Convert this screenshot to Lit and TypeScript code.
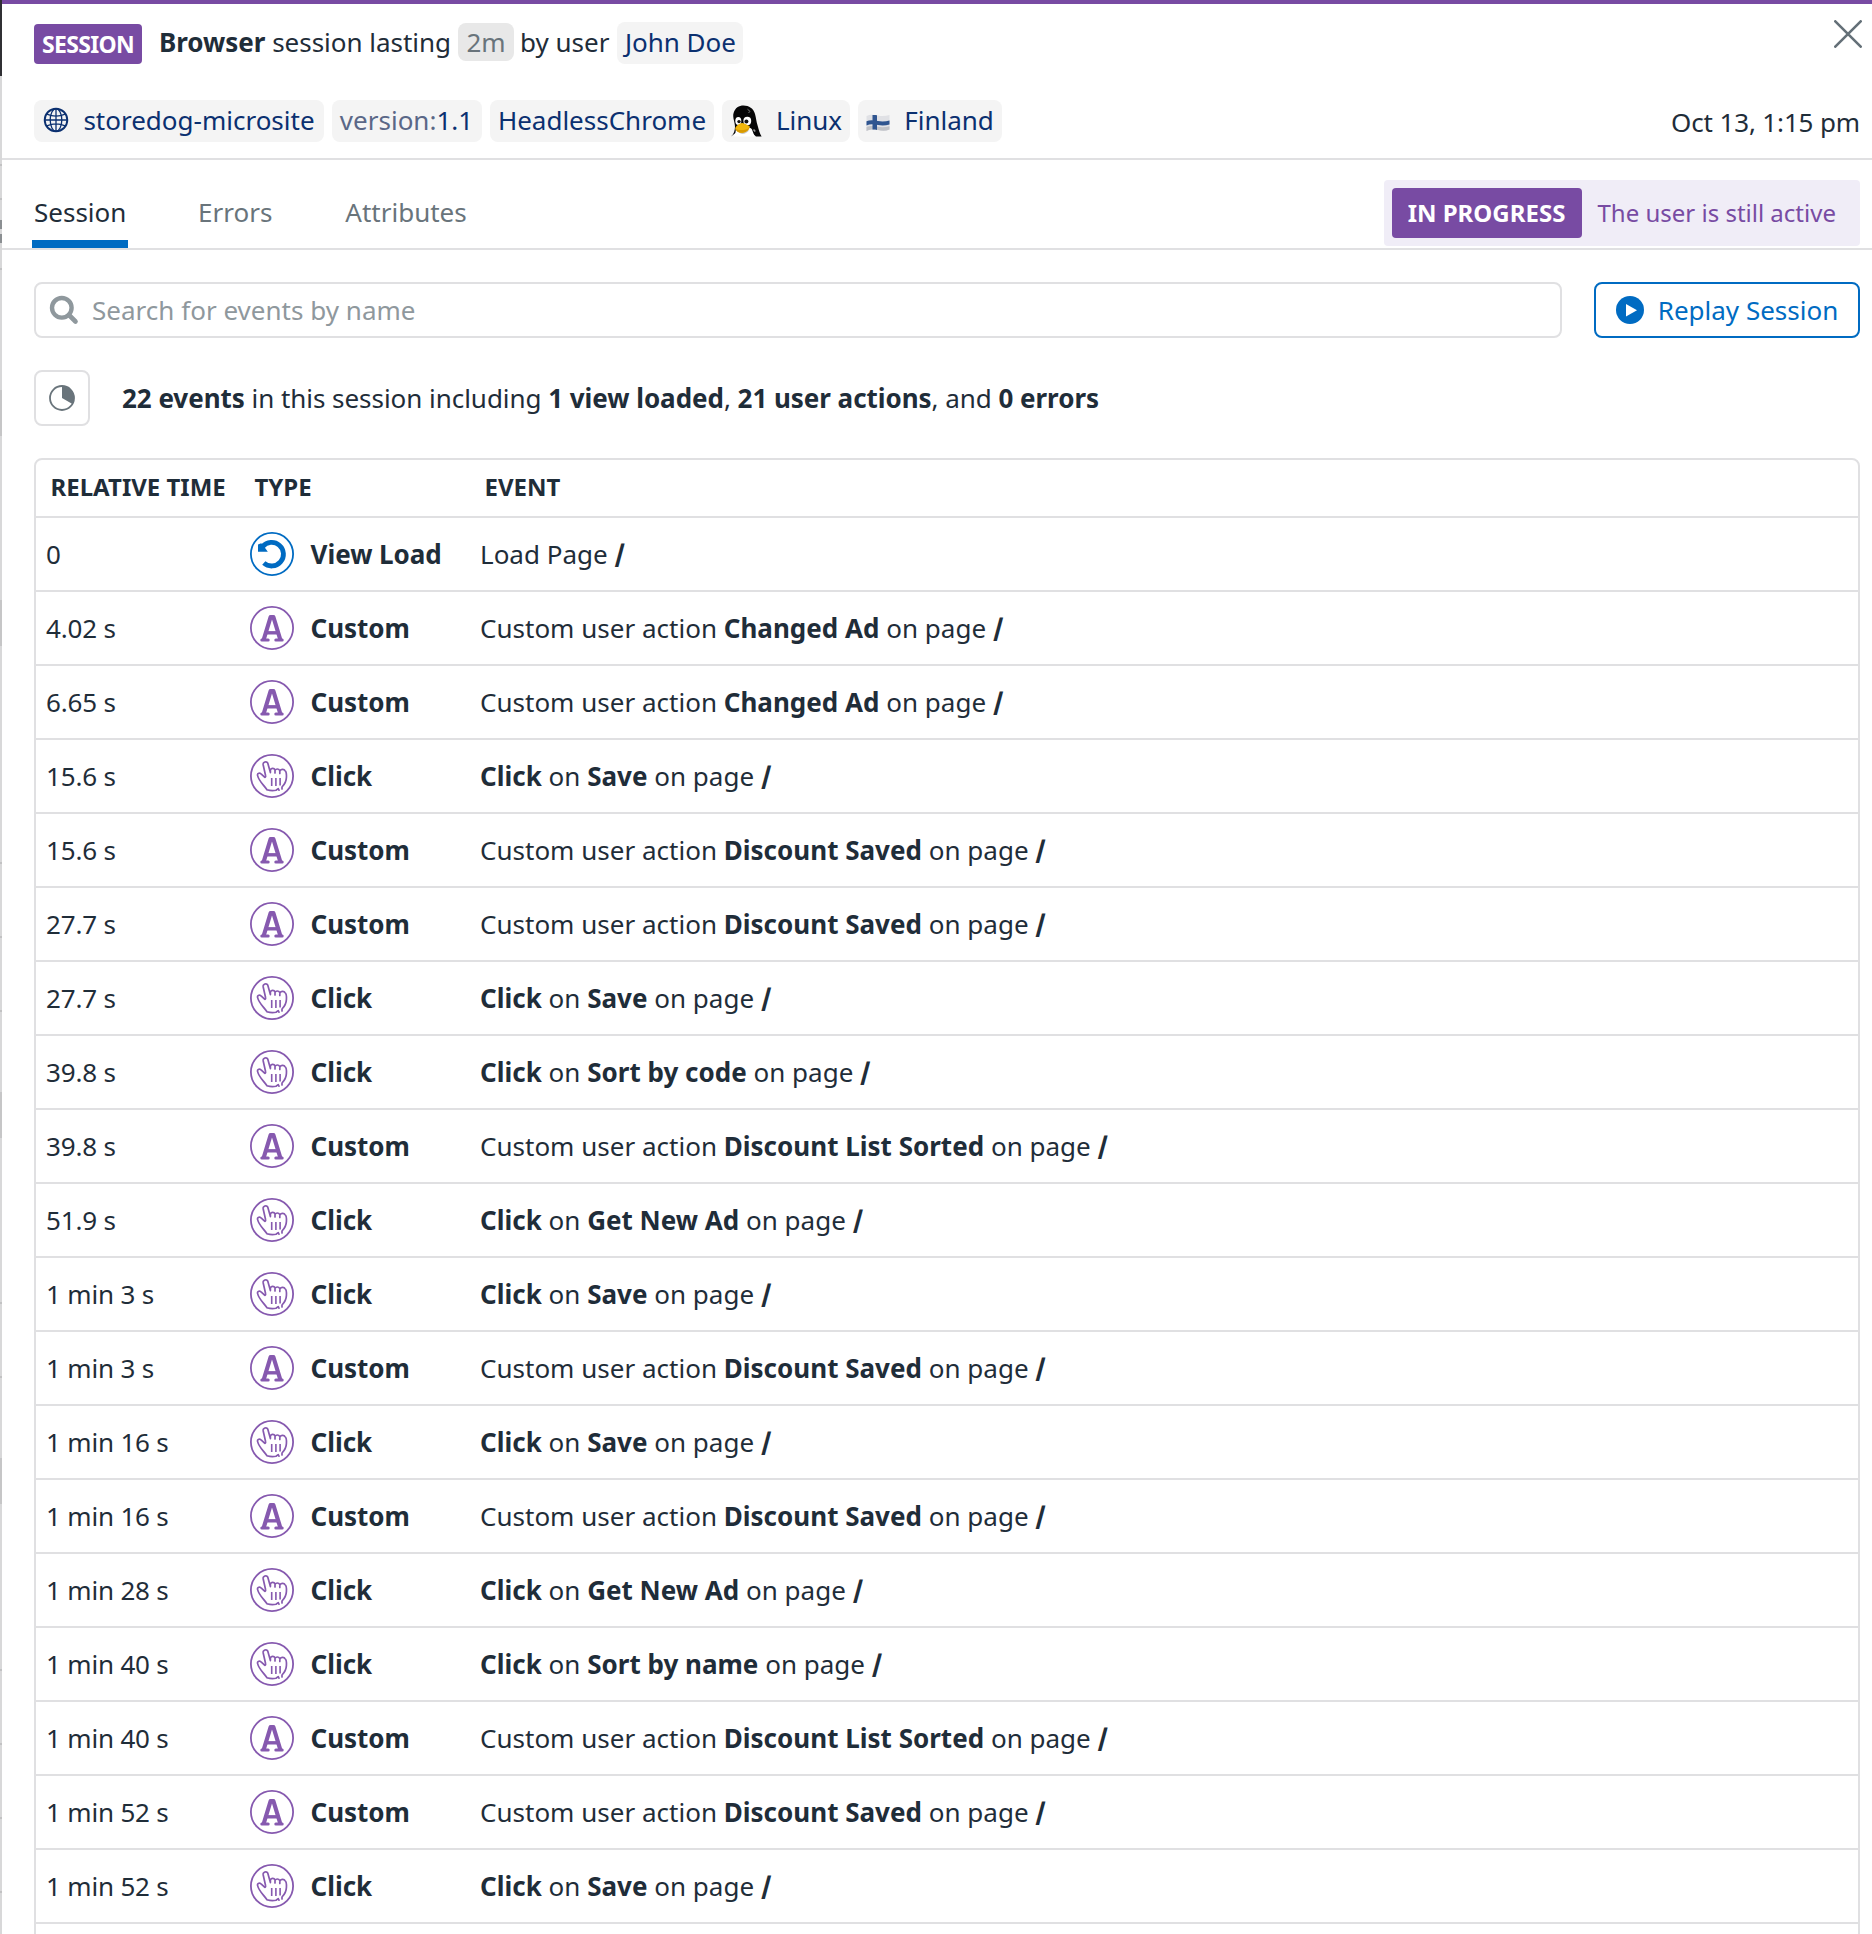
import { LitElement, html, css, svg, nothing } from "lit";
import { customElement, property } from "lit/decorators.js";

type Kind = "view" | "custom" | "click";
interface EventRow {
  time: string;
  kind: Kind;
  target: string;
}

const LABELS: Record<Kind, string> = { view: "View Load", custom: "Custom", click: "Click" };

const ROWS: EventRow[] = [
  { time: "0", kind: "view", target: "" },
  { time: "4.02 s", kind: "custom", target: "Changed Ad" },
  { time: "6.65 s", kind: "custom", target: "Changed Ad" },
  { time: "15.6 s", kind: "click", target: "Save" },
  { time: "15.6 s", kind: "custom", target: "Discount Saved" },
  { time: "27.7 s", kind: "custom", target: "Discount Saved" },
  { time: "27.7 s", kind: "click", target: "Save" },
  { time: "39.8 s", kind: "click", target: "Sort by code" },
  { time: "39.8 s", kind: "custom", target: "Discount List Sorted" },
  { time: "51.9 s", kind: "click", target: "Get New Ad" },
  { time: "1 min 3 s", kind: "click", target: "Save" },
  { time: "1 min 3 s", kind: "custom", target: "Discount Saved" },
  { time: "1 min 16 s", kind: "click", target: "Save" },
  { time: "1 min 16 s", kind: "custom", target: "Discount Saved" },
  { time: "1 min 28 s", kind: "click", target: "Get New Ad" },
  { time: "1 min 40 s", kind: "click", target: "Sort by name" },
  { time: "1 min 40 s", kind: "custom", target: "Discount List Sorted" },
  { time: "1 min 52 s", kind: "custom", target: "Discount Saved" },
  { time: "1 min 52 s", kind: "click", target: "Save" },
];

/* Row separators and shaded cells of the page behind the panel: [top, height, fill]. */
const BACKDROP: [number, number, string][] = [
  [0, 76, "#303034"],
  [164, 2, "#c2c2c3"],
  [198, 2, "#c2c2c3"],
  [220, 9, "#8b8f92"],
  [234, 9, "#8b8f92"],
  [268, 2, "#c2c2c3"],
  [390, 46, "#c6c6c7"],
  [600, 46, "#c6c6c7"],
  [862, 2, "#c2c2c3"],
  [936, 2, "#c2c2c3"],
  [1010, 2, "#c2c2c3"],
  [1092, 46, "#c6c6c7"],
  [1302, 2, "#c2c2c3"],
  [1376, 2, "#c2c2c3"],
  [1458, 46, "#c6c6c7"],
  [1669, 2, "#c2c2c3"],
  [1743, 2, "#c2c2c3"],
  [1817, 2, "#c2c2c3"],
  [1891, 2, "#c2c2c3"],
];

/* Circled glyph that marks the kind of an event. */
@customElement("event-icon")
export class EventIcon extends LitElement {
  @property() kind: Kind = "custom";

  static styles = css`
    :host { display: block; width: 44px; height: 44px; }
    .icon { display: block; width: 44px; height: 44px; fill: none; color: #8659af; }
    .view { color: #006bc2; }
  `;

  private glyph() {
    if (this.kind === "view") {
      return svg`
        <path d="M12.6 14.6 A11.8 11.8 0 1 1 13.8 31" stroke="currentColor" stroke-width="4.8"/>
        <path d="M8 12.4 L11.2 11.2 L13 13 L17.8 19.8 H8 Z" fill="currentColor"/>`;
    }
    if (this.kind === "custom") {
      return svg`
        <path d="M13.6 34 L20.6 11 H23.4 L30.4 34" stroke="currentColor" stroke-width="4.2" stroke-linejoin="round"/>
        <path d="M16.5 26.8 H27.5" stroke="currentColor" stroke-width="3.4"/>
        <path d="M11.8 33.9 H18.2 M25.8 33.9 H32.2" stroke="currentColor" stroke-width="3" stroke-linecap="round"/>`;
    }
    return svg`
      <path d="M17 35.8 C14 31.2 9.2 27.6 7.6 21.6 C7 19 10 18.2 11.6 20.4 L14.6 23.2 C15.6 23.6 15.8 22.4 15.5 21.3 L13.2 11 C12.6 8 16.6 6.6 17.8 9.2 L20.4 18.6 V15.8 C21.4 13.8 24.2 14 25 16 V19 M25 16.4 C26 14.6 28.6 14.4 29.8 16.6 V19.4 M29.8 17.2 C31 14.8 34.2 15 35 16.6 C36.8 17.8 36.6 20 36.4 23.6 C36.2 27.8 34.6 30.4 32 33 V35 M17 35.8 C19 36.4 22 37.2 26 36.2 L28.2 34.6 L29 36.2" stroke="currentColor" stroke-width="1.7" stroke-linejoin="round" stroke-linecap="round"/>
      <path d="M21.7 24 V32 M25.9 24 V32 M30.1 24 V31.5" stroke="currentColor" stroke-width="1.6"/>`;
  }

  render() {
    return html`<svg class="icon ${this.kind}" viewBox="0 0 44 44">
      <circle cx="22" cy="22" r="21.1" stroke="currentColor" stroke-width="1.8"></circle>
      ${this.glyph()}
    </svg>`;
  }
}

const globe = html`<svg class="globe" viewBox="0 0 26 26">
  <circle cx="13" cy="13" r="11.3" stroke-width="1.9"></circle>
  <ellipse cx="13" cy="13" rx="5.8" ry="11.3"></ellipse>
  <path d="M13 1.7 V24.3 M1.7 13 H24.3 M3.8 7.2 Q13 11 22.2 7.2 M3.8 18.8 Q13 15 22.2 18.8"></path>
</svg>`;

const penguin = html`<svg class="penguin" viewBox="0 0 32 32">
  <path d="M1 31.4 C4 29 4.8 26 5 22 C5.2 18 2.2 12 3.600 8 C5 3 9 .6 13.5 .6 C19 .6 23.500 3.5 25 9 C26 12.500 26.400 17 27.600 20.500 C29 25 29.500 28.500 31.600 31.400 H26 L20 26 H8 Z" fill="#050506"></path>
  <path d="M6 23 C9.500 21.500 20 21 22 24.500 L24.600 31.400 H3.600 C6 29 5.500 26 6 23 Z" fill="#fff"></path>
  <path d="M7.500 25 C10 30.500 15 30 19.500 25 L13 27 Z" fill="#c9c9cb"></path>
  <ellipse cx="8.300" cy="16" rx="3" ry="3.900" fill="#fff"></ellipse>
  <ellipse cx="17.300" cy="16" rx="3.900" ry="4.200" fill="#fff"></ellipse>
  <circle cx="9" cy="16.600" r="1.700" fill="#111"></circle>
  <circle cx="16.400" cy="16.600" r="2" fill="#111"></circle>
  <path d="M5.200 23 C7 20 10 17.600 12.500 18 C15 18.400 17 20 19.800 21.200 C19.500 25 15 27.800 11.800 27.800 C8.500 27.800 5.500 26 5.200 23 Z" fill="#f2b70c"></path>
  <path d="M5.400 23.400 C8 25.600 15.500 26 19.600 22.400 C18.500 26.200 14.500 27.800 11.800 27.800 C8.800 27.800 6 26 5.400 23.400 Z" fill="#d99a00"></path>
  <path d="M17.500 4.200 L20 6.400 L18.500 8" stroke="#777" stroke-width="1" fill="none"></path>
  <path d="M23.500 24.500 L25.200 26.500" stroke="#999" stroke-width="1.600"></path>
</svg>`;

const flag = html`<svg class="flag" viewBox="0 0 24 18">
  <path d="M.5 2 C4 .2 8 .5 12 1.500 C16 2.500 20 2 23.500 1 V15.500 C20 17 16 17 12 16 C8 15.200 4 15.500 .5 17 Z" fill="#e0e1e5"></path>
  <path d="M.5 13 C5 11.500 8 12 12 12.800 C16 13.600 20 13.200 23.500 12.200 V15.500 C20 17 16 17 12 16 C8 15.200 4 15.500 .5 17 Z" fill="#c0c2c7"></path>
  <path d="M6.500 1 C8 .8 9.500 1 11 1.300 V15.900 C9.500 15.500 8 15.400 6.500 15.500 Z" fill="#2f5590"></path>
  <path d="M.5 7.200 C4 5.600 8 6.200 12 7 C16 7.800 20 7.400 23.500 6.400 V10.400 C20 11.500 16 11.800 12 11 C8 10.200 4 9.800 .5 11.400 Z" fill="#2f5590"></path>
</svg>`;

@customElement("app-root")
export class AppRoot extends LitElement {
  static styles = css`
    :host {
      display: flex;
      height: 1934px;
      overflow: hidden;
      background: #fff;
      color: #1f2d39;
      font: 26px/36px "Noto Sans", sans-serif;
    }
    * { box-sizing: border-box; }
    svg { display: block; flex: none; fill: none; }
    b { font-weight: 700; }
    .backdrop { width: 2px; height: 1934px; background: #d8d8d9; }
    .panel { flex: 1; min-width: 0; border-top: 4px solid #784ba3; }
    .header { height: 156px; padding: 18px 12px 0 32px; border-bottom: 2px solid #e0e0e2; }
    .title-row { display: flex; align-items: flex-start; height: 78px; }
    .badge {
      display: flex; align-items: center; justify-content: center;
      background: #784ba3; color: #fff; font-weight: 700; border-radius: 4px;
    }
    .session { width: 108px; height: 40px; margin: 2px 17px 0 0; padding-bottom: 1px; font-size: 23px; letter-spacing: -0.7px; }
    .title { flex: 1; display: flex; align-items: center; height: 42px; white-space: pre; letter-spacing: -0.02px; }
    .title > *, .chip > span { padding-bottom: 2px; }
    .chip {
      display: flex; align-items: center; justify-content: center; height: 42px; flex: none; padding-bottom: 2px;
      background: #f4f4f4; color: #0b3070; border-radius: 8px; white-space: pre;
    }
    .tags-row .chip { padding-bottom: 0; }
    .duration { height: 38px; width: 56px; margin: 0 6px 2px 7px; padding-bottom: 0; background: #e8e8e8; color: #69747b; }
    .name { width: 126px; margin-left: 8px; }
    .close { width: 28px; height: 28px; margin: -2px -2px 0 0; stroke: #647078; stroke-width: 2.6; stroke-linecap: round; }
    .tags-row { display: flex; gap: 8px; }
    .app { width: 290px; gap: 14px; }
    .version { width: 150px; padding-right: 1px; }
    .key { color: #5a6787; }
    .browser { width: 224px; }
    .os { width: 128px; gap: 14px; }
    .country { width: 144px; gap: 14px; }
    .globe { width: 26px; height: 26px; margin-bottom: 2px; stroke: #0b3070; stroke-width: 1.3; }
    .penguin { width: 32px; height: 32px; }
    .flag { width: 24px; height: 18px; margin-top: 3px; }
    .date { margin: 4px 0 0 auto; letter-spacing: -0.14px; }
    .tabs { display: flex; height: 90px; padding: 20px 12px 0 30px; border-bottom: 2px solid #e0e0e2; color: #69747b; }
    .tab { height: 68px; padding: 14px 2px 0; margin-right: 69px; white-space: nowrap; }
    .active { color: #1f2d39; border-bottom: 8px solid #006bc2; width: 96px; margin-right: 68px; }
    .status {
      display: flex; align-items: center; width: 476px; height: 66px; margin-left: auto; padding: 8px;
      border-radius: 4px; background: #f0edf7; color: #784ba3; font-size: 24px;
    }
    .progress { width: 190px; height: 50px; margin-right: 15.5px; padding-right: 1px; }
    .body { padding: 32px 12px 0 32px; }
    .search-row { display: flex; gap: 32px; height: 56px; }
    .search { flex: 1; display: flex; align-items: center; padding-left: 13px; gap: 13px; border: 2px solid #e0e0e2; border-radius: 8px; color: #8f989d; letter-spacing: 0.02px; }
    .lens { width: 30px; height: 30px; stroke: #8f989d; }
    .replay { display: flex; align-items: center; justify-content: center; gap: 14px; width: 266px; border: 2px solid #006bc2; border-radius: 8px; color: #006bc2; }
    .play { width: 28px; height: 28px; }
    .summary { display: flex; align-items: center; height: 56px; margin: 32px 0; white-space: pre; letter-spacing: -0.04px; }
    .pie-button { display: flex; align-items: center; justify-content: center; width: 56px; height: 56px; margin-right: 32px; border: 2px solid #e0e0e2; border-radius: 8px; }
    .pie { width: 26px; height: 26px; }
    .table { height: 1500px; border: 2px solid #e0e0e2; border-radius: 8px; }
    .head, .row { display: grid; grid-template-columns: 204px 230px 1fr; align-items: center; border-bottom: 2px solid #e0e0e2; }
    .head { height: 58px; padding: 0 0 2px 14.5px; font-size: 24px; font-weight: 700; }
    .row { height: 74px; padding-left: 10px; }
    .time { letter-spacing: -0.18px; }
    .type { display: flex; align-items: center; gap: 16.6px; font-weight: 700; letter-spacing: -0.04px; }
    .event { white-space: pre; letter-spacing: 0.01px; }
    .path { font-family: Inter, "Noto Sans", sans-serif; font-size: 27px; line-height: 30px; }
  `;

  private describe(row: EventRow) {
    const path = html`<b class="path">/</b>`;
    if (row.kind === "view") return html`Load Page ${path}`;
    if (row.kind === "custom") return html`Custom user action <b>${row.target}</b> on page ${path}`;
    return row.target ? html`<b>Click</b> on <b>${row.target}</b> on page ${path}` : nothing;
  }

  render() {
    return html`
      <svg class="backdrop" viewBox="0 0 2 1934">
        ${BACKDROP.map(([y, h, fill]) => svg`<rect x="0" y=${y} width="2" height=${h} fill=${fill}></rect>`)}
      </svg>
      <main class="panel">
        <header class="header">
          <div class="title-row">
            <span class="badge session">SESSION</span>
            <div class="title"><b>Browser</b><span> session lasting</span><span class="chip duration">2m</span><span>by user</span><span class="chip name">John Doe</span></div>
            <svg class="close" viewBox="0 0 28 28"><path d="M1.300 1.300 L26.700 26.700 M26.700 1.300 L1.300 26.700"></path></svg>
          </div>
          <div class="tags-row">
            <span class="chip app">${globe}<span>storedog-microsite</span></span>
            <span class="chip version"><span class="key">version:</span><span>1.1</span></span>
            <span class="chip browser"><span>HeadlessChrome</span></span>
            <span class="chip os">${penguin}<span>Linux</span></span>
            <span class="chip country">${flag}<span>Finland</span></span>
            <span class="date">Oct 13, 1:15 pm</span>
          </div>
        </header>
        <nav class="tabs">
          <span class="tab active">Session</span>
          <span class="tab">Errors</span>
          <span class="tab">Attributes</span>
          <div class="status"><span class="badge progress">IN PROGRESS</span>The user is still active</div>
        </nav>
        <section class="body">
          <div class="search-row">
            <div class="search">
              <svg class="lens" viewBox="0 0 30 30"><circle cx="12.800" cy="12.800" r="9.800" stroke-width="4.400"></circle><path d="M20 20 L26.500 26.500" stroke-width="4.600" stroke-linecap="round"></path></svg>
              <span>Search for events by name</span>
            </div>
            <div class="replay">
              <svg class="play" viewBox="0 0 28 28"><circle cx="14" cy="14" r="14" fill="#006bc2"></circle><path d="M10 8 L21 14.300 L10 20.500 Z" fill="#fff"></path></svg>
              <span>Replay Session</span>
            </div>
          </div>
          <div class="summary">
            <div class="pie-button"><svg class="pie" viewBox="0 0 26 26"><circle cx="13" cy="13" r="12" stroke="#69747b" stroke-width="1.800"></circle><path d="M13 13 V1 A12 12 0 0 1 23.400 19 Z" fill="#69747b"></path></svg></div>
            <div><b>22 events</b> in this session including <b>1 view loaded</b>, <b>21 user actions</b>, and <b>0 errors</b></div>
          </div>
          <div class="table">
            <div class="head"><span>RELATIVE TIME</span><span>TYPE</span><span>EVENT</span></div>
            ${ROWS.map(
              (row) => html`<div class="row">
                <span class="time">${row.time}</span>
                <span class="type"><event-icon .kind=${row.kind}></event-icon>${LABELS[row.kind]}</span>
                <span class="event">${this.describe(row)}</span>
              </div>`,
            )}
          </div>
        </section>
      </main>
    `;
  }
}
